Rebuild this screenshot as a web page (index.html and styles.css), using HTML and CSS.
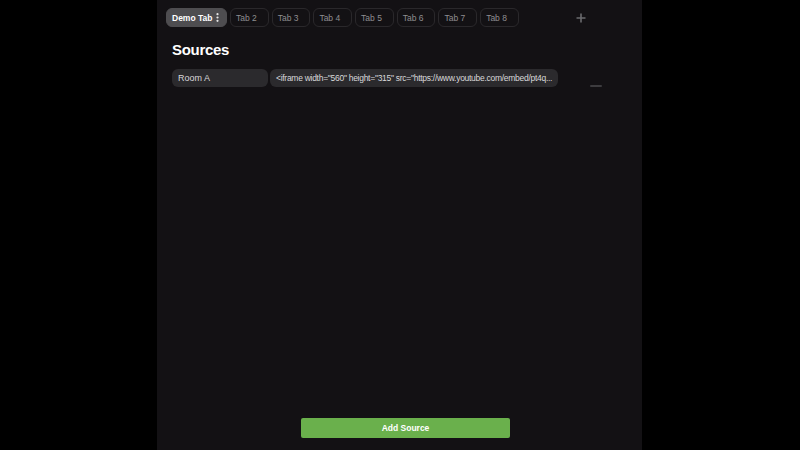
FILE: index.html
```html
<!DOCTYPE html>
<html>
<head>
<meta charset="utf-8">
<link rel="stylesheet" href="styles.css">
</head>
<body>
<div class="page">
  <main class="panel">
    <nav class="tabs">
      <div class="tab active">Demo Tab
        <svg class="dots" width="3" height="9" viewBox="0 0 3 9"><circle cx="1.5" cy="1.2" r="1.1"/><circle cx="1.5" cy="4.5" r="1.1"/><circle cx="1.5" cy="7.8" r="1.1"/></svg>
      </div>
      <div class="tab">Tab 2</div>
      <div class="tab">Tab 3</div>
      <div class="tab">Tab 4</div>
      <div class="tab">Tab 5</div>
      <div class="tab">Tab 6</div>
      <div class="tab">Tab 7</div>
      <div class="tab">Tab 8</div>
      <div class="add-tab">
        <svg width="10" height="10" viewBox="0 0 10 10"><path d="M5 0.5v9M0.5 5h9" stroke="#6b6b6e" stroke-width="1.6"/></svg>
      </div>
    </nav>
    <h1 class="title">Sources</h1>
    <div class="source-row">
      <div class="field name">Room A</div>
      <div class="field url">&lt;iframe width="560" height="315" src="https://www.youtube.com/embed/pt4q...</div>
      <div class="remove"><span></span></div>
    </div>
    <div class="spacer"></div>
    <div class="footer">
      <button class="add-source">Add Source</button>
    </div>
  </main>
</div>
</body>
</html>
```

FILE: styles.css
```css
* { box-sizing: border-box; }
html, body { margin: 0; padding: 0; height: 100%; background: #000; }
body { font-family: "Liberation Sans", Arial, sans-serif; }
.page { display: flex; justify-content: center; height: 450px; }
.panel {
  width: 485px;
  margin-left: -1px;
  height: 450px;
  background: #131114;
  padding: 8px 9px 12px 9px;
  display: flex;
  flex-direction: column;
}
.tabs { display: flex; align-items: center; gap: 3px; height: 19px; }
.tab {
  height: 19px;
  width: 38.7px;
  flex: none;
  border: 1px solid #2a282b;
  border-radius: 6px;
  color: #8f8e91;
  font-size: 8.5px;
  padding: 0 0 0 5px;
  display: flex;
  align-items: center;
  white-space: nowrap;
}
.tab.active {
  width: 61px;
  background: #4e4d50;
  border-color: #4e4d50;
  color: #fff;
  font-weight: bold;
  padding-left: 5px;
}
.dots { fill: #e6e6e6; margin-left: 4px; }
.add-tab { margin-left: 54px; display: flex; align-items: center; padding-top: 1px; }
.title {
  margin: 14px 0 0 6px;
  color: #fff;
  font-size: 15px;
  letter-spacing: -0.3px;
  font-weight: bold;
  line-height: 18px;
}
.source-row { display: flex; align-items: center; margin: 10px 0 0 6px; gap: 2px; }
.field {
  height: 18px;
  border-radius: 6px;
  background: #2b2a2d;
  color: #d8d8da;
  font-size: 9px;
  display: flex;
  align-items: center;
  padding: 0 6px;
  white-space: nowrap;
  overflow: hidden;
}
.name { width: 96px; }
.url { width: 288px; font-size: 8.5px; letter-spacing: -0.28px; }
.remove { margin-left: 30px; padding-top: 16px; }
.remove span { display: block; width: 12px; height: 2px; background: #3d3c3f; border-radius: 1px; }
.spacer { flex: 1; }
.footer { display: flex; justify-content: center; padding-left: 12px; }
.add-source {
  width: 209px;
  height: 20px;
  border: none;
  border-radius: 2px;
  background: #6ab04c;
  color: #fff;
  font-family: "Liberation Sans", Arial, sans-serif;
  font-weight: bold;
  font-size: 8.5px;
}
```
